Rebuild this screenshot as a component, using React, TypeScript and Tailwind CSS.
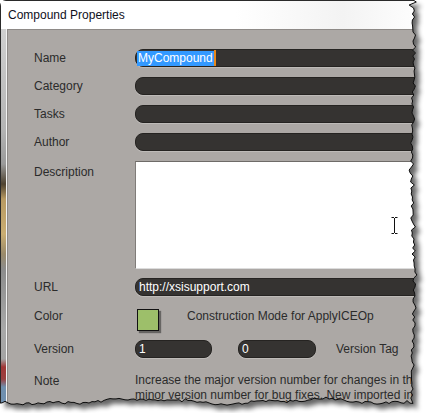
import React from "react";

function rng(seed: number) {
  let s = seed;
  return () => {
    s = (s * 16807) % 2147483647;
    return (s - 1) / 2147483646;
  };
}

function buildEdge() {
  const r = rng(12345);
  const pts: [number, number][] = [[413, 0]];
  for (let y = 2; y <= 398; y += 3) {
    const big = r() < 0.1 ? (r() - 0.5) * 5 : 0;
    const x = 413 + (r() - 0.5) * 3.5 + big + Math.sin(y / 37) * 1.2;
    pts.push([x, y]);
  }
  for (let x = 413; x >= 0; x -= 3) {
    const big = r() < 0.1 ? (r() - 0.5) * 4 : 0;
    const y = 401.5 + Math.sin(x / 29) * 2 + Math.sin(x / 11) * 1 + (r() - 0.5) * 2.5 + big;
    pts.push([x, y]);
  }
  pts.push([0, 403]);
  const line = "M" + pts.map((p) => p[0].toFixed(1) + " " + p[1].toFixed(1)).join(" L");
  const poly = "M0 0 L" + pts.map((p) => p[0].toFixed(1) + " " + p[1].toFixed(1)).join(" L") + " Z";
  return { line, poly };
}

const { line, poly } = buildEdge();
const outside = "M-5 -5 H440 V420 H-5 Z " + poly;

function TornOverlay() {
  return (
    <svg className="absolute inset-0 pointer-events-none" width="428" height="413" viewBox="0 0 428 413">
      <defs>
        <clipPath id="outsideClip">
          <path d={outside} clipRule="evenodd" />
        </clipPath>
        <filter id="shadowBlur" x="-10%" y="-10%" width="120%" height="120%">
          <feGaussianBlur stdDeviation="2.6" />
        </filter>
      </defs>
      <path d={outside} fill="#ffffff" fillRule="evenodd" />
      <g clipPath="url(#outsideClip)">
        <path d={poly} transform="translate(5,5)" fill="#000" opacity="0.6" filter="url(#shadowBlur)" />
      </g>
      <path d={line} stroke="#0d0d0d" strokeWidth="1" fill="none" />
    </svg>
  );
}

function Field({ children, className }: { children?: React.ReactNode; className: string }) {
  return (
    <div
      className={
        "h-[18px] rounded-l-[8px] bg-[#353331] border border-[#252321] shadow-[0_1px_0_rgba(255,255,255,0.22)] flex items-center text-white text-[12px] leading-[14px] " +
        className
      }
    >
      {children}
    </div>
  );
}

export default function App() {
  return (
    <div className="relative w-[428px] h-[413px] overflow-hidden bg-white font-['Liberation_Sans',Arial,sans-serif]">
      <div className="flex flex-col h-full border-t border-l border-[#2a2a2a] rounded-tl-[6px] bg-white">
        <div className="h-[28px] flex flex-col pl-[7px] bg-[linear-gradient(to_right,#ffffff_0%,#ffffff_55%,#f3f3f3_80%,#ffffff_100%)]">
          <div className="h-[20px] pt-[7px] text-[12px] leading-[14px] text-[#10101c]">Compound Properties</div>
        </div>
        <div className="flex flex-1 min-h-0">
          <div className="w-[6px] shrink-0 border-r border-[#f2f2f2] bg-[linear-gradient(to_bottom,#d0d0d0_0px,#b4b4b4_100px,#9a9a9a_135px,#4e4230_155px,#b89a62_170px,#c9ad72_205px,#9a8a6a_225px,#8c8c8c_240px,#a8a8a8_300px,#a4a4a4_330px,#a03636_338px,#9a4040_350px,#6f8fae_358px,#7090b0_375px)]" />
          <div className="flex-1 min-w-0 bg-[#aca8a5] border-t border-l border-[#8e8a87] pt-[19px] pl-[26px] text-[12px] leading-[16px] text-[#2b2b2b] overflow-hidden">
            <div className="flex items-center h-[18px]">
              <div className="w-[101px] shrink-0">Name</div>
              <Field className="flex-1 pl-[1px]">
                <span className="bg-[#3399ff] text-white leading-[15px] pl-[1px] pr-[1px]">MyCompound</span>
                <span className="w-[2px] h-[16px] bg-[#e8891c]" />
              </Field>
            </div>
            <div className="flex items-center h-[18px] mt-[10px]">
              <div className="w-[101px] shrink-0">Category</div>
              <Field className="flex-1" />
            </div>
            <div className="flex items-center h-[18px] mt-[10px]">
              <div className="w-[101px] shrink-0">Tasks</div>
              <Field className="flex-1" />
            </div>
            <div className="flex items-center h-[18px] mt-[10px]">
              <div className="w-[101px] shrink-0">Author</div>
              <Field className="flex-1" />
            </div>
            <div className="flex items-start h-[108px] mt-[10px]">
              <div className="w-[101px] shrink-0 pt-[3px]">Description</div>
              <div className="relative flex-1 h-[108px] bg-white border-t border-l border-b border-t-[#6e6b68] border-l-[#807c79] border-b-[#dcdcdc]">
                <svg className="absolute left-[255px] top-[55px]" width="8" height="17" viewBox="0 0 8 17">
                  <path d="M0.5 0.5 H3 M4 0.5 H6.5 M3.5 1 V16 M0.5 16.5 H3 M4 16.5 H6.5" stroke="#111" strokeWidth="1" fill="none" />
                </svg>
              </div>
            </div>
            <div className="flex items-center h-[18px] mt-[9px]">
              <div className="w-[101px] shrink-0">URL</div>
              <Field className="flex-1 pl-[3px]">http://xsisupport.com</Field>
            </div>
            <div className="flex items-start h-[24px] mt-[12px]">
              <div className="w-[101px] shrink-0">Color</div>
              <div className="ml-[2px] mt-[1px] w-[22px] h-[22px] shrink-0 bg-[#9dbf6a] border border-[#111] shadow-[2px_2px_1px_rgba(0,0,0,0.4)]" />
              <div className="ml-[28px] whitespace-nowrap">Construction Mode for ApplyICEOp</div>
            </div>
            <div className="flex items-center h-[18px] mt-[8px]">
              <div className="w-[101px] shrink-0">Version</div>
              <Field className="w-[77px] shrink-0 rounded-r-[8px] pl-[3px]">1</Field>
              <Field className="w-[78px] shrink-0 ml-[26px] rounded-r-[8px] pl-[3px]">0</Field>
              <div className="ml-[20px] whitespace-nowrap">Version Tag</div>
            </div>
            <div className="flex items-start mt-[15px]">
              <div className="w-[101px] shrink-0">Note</div>
              <div className="whitespace-nowrap leading-[15px]">
                Increase the major version number for changes in the compound interface, and the
                <br />
                minor version number for bug fixes. New imported instances will be updated.
              </div>
            </div>
          </div>
        </div>
      </div>
      <TornOverlay />
    </div>
  );
}
